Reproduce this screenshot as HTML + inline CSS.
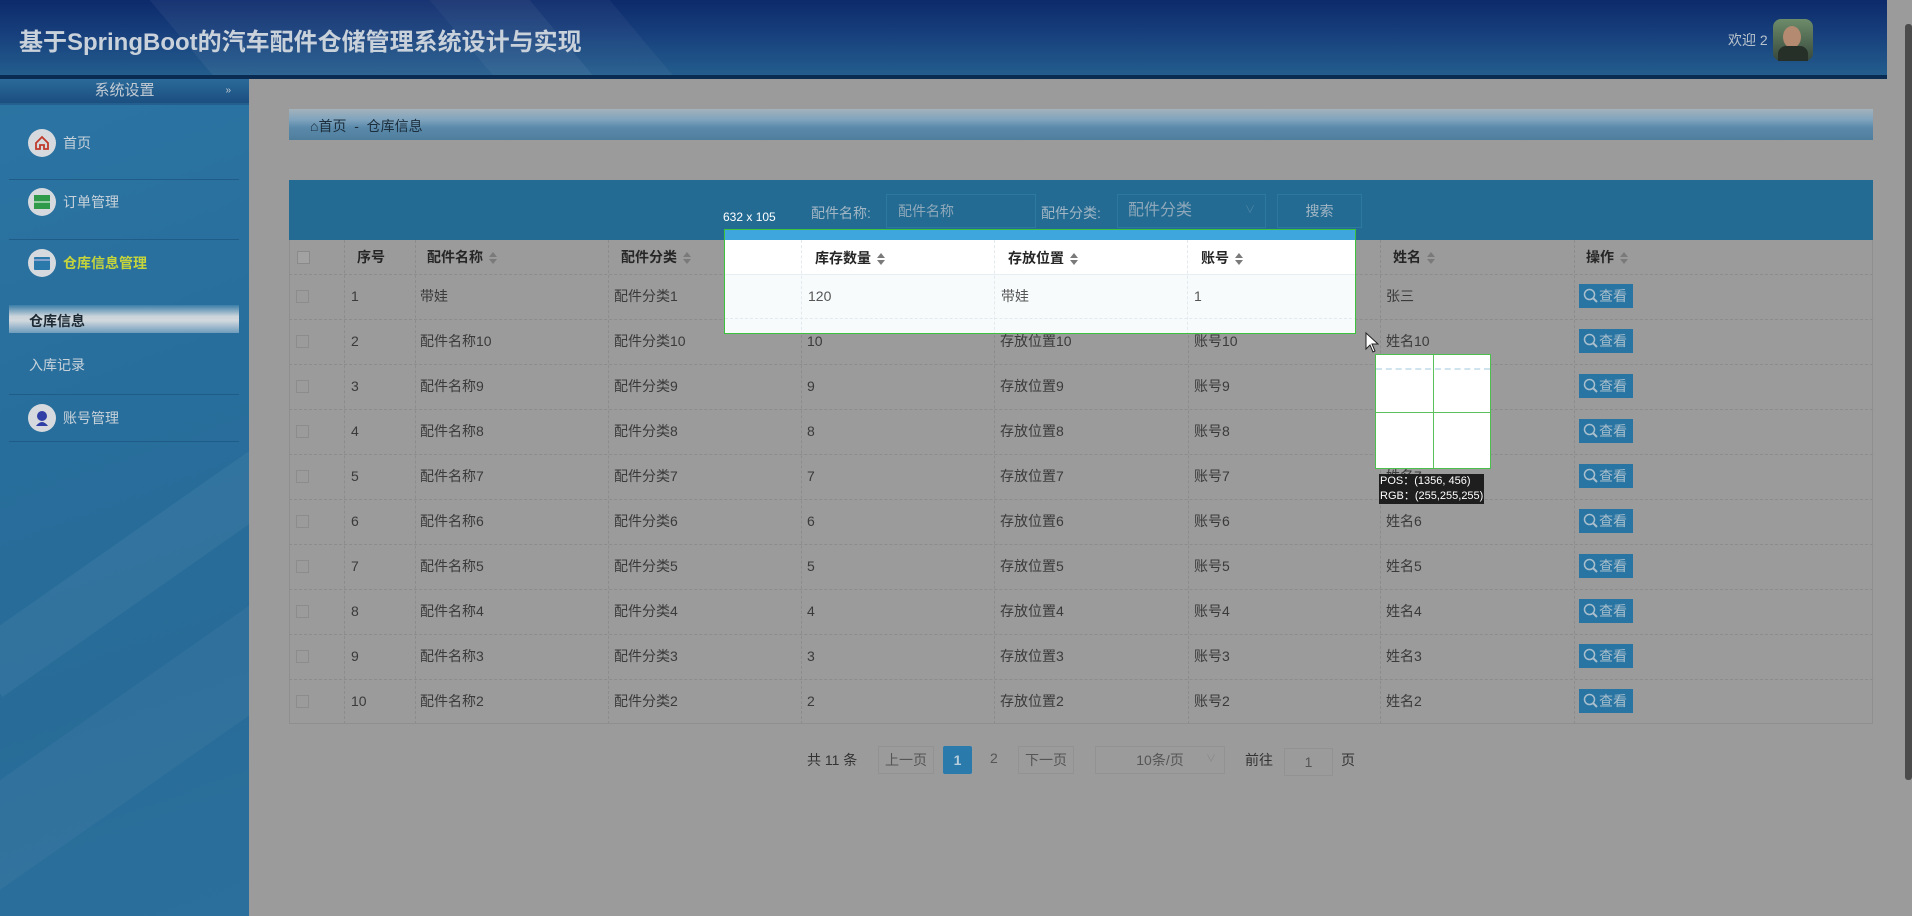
<!DOCTYPE html>
<html><head><meta charset="utf-8"><style>
*{margin:0;padding:0;box-sizing:border-box}
body{width:1912px;height:916px;overflow:hidden;background:#9b9b9b;font-family:"Liberation Sans","Noto Sans CJK SC",sans-serif;position:relative;color:#383838;font-size:14px}
.abs{position:absolute}
#hdr{left:0;top:0;width:1887px;height:79px;background:linear-gradient(180deg,#0d2a6b 0%,#173f7c 45%,#235d8d 100%);border-bottom:4px solid #0a2c52;overflow:hidden}
#hdr .t{left:19px;top:22px;font-size:24px;font-weight:bold;color:#c9d1da}
#side{left:0;top:79px;width:249px;height:837px;background:linear-gradient(160deg,#2b74a3 0%,#286e9c 40%,#286b98 70%,#2b709d 100%);overflow:hidden}
.streak{position:absolute;background:rgba(255,255,255,.05);transform:rotate(-35deg)}
#sys{left:0;top:0;width:249px;height:26px;background:linear-gradient(180deg,#2b6a9a,#1b4f80);color:#c4ccd4;text-align:center;font-size:15px;line-height:24px;border-bottom:2px solid #24608f}
.mi{position:absolute;left:28px;width:220px;height:30px;color:#c8d2da;font-size:14px;line-height:30px}
.mi .ic{position:absolute;left:0;top:1px;width:28px;height:28px;border-radius:50%;background:#d6dade}
.mi span{position:absolute;left:35px}
.ln{position:absolute;left:9px;width:230px;height:1px;background:#1f5c88}
.th{position:absolute;top:240px;height:34px;line-height:34px;font-weight:bold;font-size:14px;color:#262626}
.td{position:absolute;height:45px;line-height:45px;font-size:14px;color:#3a3a3a}
.arr{display:inline-block;vertical-align:middle;margin-left:6px;width:8px;height:12px;position:relative}
.arr:before{content:"";position:absolute;left:0;top:0;border:4px solid transparent;border-bottom:5px solid #7a7a7a;border-top:0}
.arr:after{content:"";position:absolute;left:0;top:7px;border:4px solid transparent;border-top:5px solid #7a7a7a;border-bottom:0}
.btn{position:absolute;width:54px;height:24px;background:#2874a2;color:#a9bfcd;font-size:14px;line-height:24px;padding-left:20px}
.btn svg{position:absolute;left:4px;top:4px}
.pg{position:absolute;top:746px;height:28px;line-height:26px;font-size:14px;text-align:center;border:1px solid #929292;color:#555}
</style></head><body>
<div id="hdr" class="abs">
<div class="abs" style="left:200px;top:-40px;width:380px;height:200px;background:rgba(255,255,255,.05);transform:skewX(40deg)"></div>
<div class="abs" style="left:480px;top:-40px;width:180px;height:200px;background:rgba(255,255,255,.04);transform:skewX(40deg)"></div>
<div class="t abs">基于SpringBoot的汽车配件仓储管理系统设计与实现</div>
<div class="abs" style="left:1728px;top:30px;color:#b9c3cc;font-size:14px">欢迎 2</div>
<div class="abs" style="left:1773px;top:19px;width:40px;height:42px;border-radius:8px;background:linear-gradient(180deg,#6d8c6a,#37483c)"></div>
<div class="abs" style="left:1783px;top:26px;width:18px;height:22px;border-radius:50%;background:#b48a70"></div>
<div class="abs" style="left:1778px;top:46px;width:30px;height:15px;border-radius:8px 8px 0 0;background:#263028"></div>
</div>
<div class="abs" style="left:1905px;top:24px;width:7px;height:756px;background:#4b4b4b;border-radius:3px"></div>

<div id="side" class="abs">
<div class="streak" style="left:-60px;top:420px;width:500px;height:60px"></div>
<div class="streak" style="left:-120px;top:620px;width:500px;height:90px;background:rgba(255,255,255,.04)"></div>
<div id="sys" class="abs">系统设置<span style="position:absolute;right:18px;top:0;font-size:10px">»</span></div>
<div class="mi" style="top:49px"><div class="ic"><svg width="28" height="28"><path d="M8 14l6-6 6 6v6h-4v-4h-4v4H8z" fill="none" stroke="#c0392b" stroke-width="1.8"/></svg></div><span>首页</span></div>
<div class="ln" style="top:100px"></div>
<div class="mi" style="top:108px"><div class="ic"><svg width="28" height="28"><rect x="6" y="7" width="16" height="14" fill="#2e9a4a"/><line x1="6" y1="14" x2="22" y2="14" stroke="#fff"/></svg></div><span>订单管理</span></div>
<div class="ln" style="top:160px"></div>
<div class="mi" style="top:169px"><div class="ic"><svg width="28" height="28"><rect x="6" y="8" width="16" height="13" rx="1" fill="#2a79aa"/><line x1="6" y1="11" x2="22" y2="11" stroke="#dce" /></svg></div><span style="color:#c6d43c;font-weight:bold">仓库信息管理</span></div>
<div class="abs" style="left:9px;top:226px;width:230px;height:28px;background:linear-gradient(180deg,#3a7ea8 0%,#c9d3da 40%,#d2d9de 55%,#6e9cbc 100%)"></div>
<div class="abs" style="left:29px;top:232px;font-size:14px;font-weight:bold;color:#1e2a33">仓库信息</div>
<div class="abs" style="left:29px;top:276px;font-size:14px;color:#c8d2da">入库记录</div>
<div class="ln" style="top:315px"></div>
<div class="mi" style="top:324px"><div class="ic"><svg width="28" height="28"><circle cx="14" cy="12" r="5" fill="#2f3fa6"/><path d="M8 22q6-8 12 0z" fill="#2f3fa6"/></svg></div><span>账号管理</span></div>
<div class="ln" style="top:362px"></div>
</div>

<div class="abs" style="left:289px;top:109px;width:1584px;height:31px;background:linear-gradient(180deg,#a3b2bc 0%,#7ea3bd 35%,#5a89aa 60%,#4f7e9d 100%)"></div>
<div class="abs" style="left:310px;top:116px;font-size:14px;color:#1c2e3c">⌂首页 &nbsp;- &nbsp;仓库信息</div>

<div class="abs" style="left:289px;top:180px;width:1584px;height:60px;background:#246b93"></div>
<div class="abs" style="left:811px;top:203px;color:#a2b6c4;font-size:14px">配件名称:</div>
<div class="abs" style="left:886px;top:194px;width:150px;height:34px;border:1px solid #2d789f;color:#8ea8ba;padding-left:11px;line-height:32px">配件名称</div>
<div class="abs" style="left:1041px;top:203px;color:#a2b6c4;font-size:14px">配件分类:</div>
<div class="abs" style="left:1117px;top:194px;width:149px;height:34px;border:1px solid #2d789f;color:#8ea8ba;padding-left:10px;line-height:32px;font-size:16px">配件分类<span style="position:absolute;right:10px;font-size:10px;color:#4f86a8">∨</span></div>
<div class="abs" style="left:1277px;top:194px;width:85px;height:34px;border:1px solid #2d789f;color:#a2b6c4;text-align:center;line-height:32px">搜索</div>

<div class="abs" style="left:289px;top:240px;width:1584px;height:484px;border:1px solid #8f8f8f;border-top:0"></div>
<div id="tbl"></div>
<div class="abs" style="left:297px;top:251px;width:13px;height:13px;border:1px solid #8a8a8a;background:#a2a2a2"></div>

<script>
var cols=[289,344,415,608,801,994,1188,1380,1574,1873];
var heads=[["序号",357,0],["配件名称",427,1],["配件分类",621,1],["库存数量",814,1],["存放位置",1007,1],["账号",1200,1],["姓名",1393,1],["操作",1586,1]];
var h="";
heads.forEach(function(x){h+='<div class="th" style="left:'+x[1]+'px">'+x[0]+(x[2]?'<i class="arr"></i>':'')+'</div>';});
for(var i=1;i<cols.length-1;i++){h+='<div class="abs" style="left:'+cols[i]+'px;top:240px;width:0;height:484px;border-left:1px dashed #8c8c8c"></div>';}
var rows=[[1,"带娃","配件分类1","120","带娃","1","张三"]];
for(var k=10;k>=2;k--)rows.push([12-k,"配件名称"+k,"配件分类"+k,""+k,"存放位置"+k,"账号"+k,"姓名"+k]);
rows.forEach(function(r,j){var y=274+j*45;
h+='<div class="abs" style="left:289px;top:'+y+'px;width:1584px;border-top:1px dashed #8c8c8c"></div>';
h+='<div class="abs" style="left:296px;top:'+(y+16)+'px;width:13px;height:13px;border:1px solid #8c8c8c"></div>';
var xs=[351,420,614,807,1000,1194,1386];
r.forEach(function(v,c){h+='<div class="td" style="left:'+xs[c]+'px;top:'+y+'px">'+v+'</div>';});
h+='<div class="btn" style="left:1579px;top:'+(y+10)+'px"><svg width="16" height="16"><circle cx="6.5" cy="6.5" r="5" fill="none" stroke="#a9bfcd" stroke-width="1.5"/><line x1="10" y1="10" x2="14" y2="14" stroke="#a9bfcd" stroke-width="2"/></svg>查看</div>';});
document.getElementById("tbl").innerHTML=h;
</script>

<div class="abs" style="left:807px;top:750px;font-size:14px;color:#333">共 11 条</div>
<div class="pg" style="left:878px;width:56px">上一页</div>
<div class="pg" style="left:943px;width:29px;background:#2a7aab;border-color:#2a7aab;color:#b9cfdd;font-weight:bold;border-radius:2px">1</div>
<div class="abs" style="left:990px;top:750px;color:#555">2</div>
<div class="pg" style="left:1018px;width:56px">下一页</div>
<div class="pg" style="left:1095px;width:130px">10条/页<span style="position:absolute;right:8px;font-size:10px;color:#888">∨</span></div>
<div class="abs" style="left:1245px;top:750px;color:#333">前往</div>
<div class="pg" style="left:1284px;width:49px;top:748px">1</div>
<div class="abs" style="left:1341px;top:750px;color:#333">页</div>

<div class="abs" style="left:724px;top:229px;width:632px;height:105px;background:#fff;border:1px solid #3cc23c;overflow:hidden">
<div class="abs" style="left:0;top:0;width:632px;height:10px;background:#3ea6dc"></div>
<div class="abs" style="left:0;top:44px;width:632px;height:61px;background:#f7fbfc;border-top:1px solid #e6eef2"></div>
<div class="abs" style="left:76px;top:10px;height:95px;border-left:1px dashed #e3eaee"></div>
<div class="abs" style="left:269px;top:10px;height:95px;border-left:1px dashed #e3eaee"></div>
<div class="abs" style="left:462px;top:10px;height:95px;border-left:1px dashed #e3eaee"></div>
<div class="abs" style="left:0;top:88px;width:632px;border-top:1px dashed #e3eaee"></div>
<div class="th" style="left:90px;top:11px">库存数量<i class="arr"></i></div>
<div class="th" style="left:283px;top:11px">存放位置<i class="arr"></i></div>
<div class="th" style="left:476px;top:11px">账号<i class="arr"></i></div>
<div class="td" style="left:83px;top:44px;color:#555">120</div>
<div class="td" style="left:276px;top:44px;color:#555">带娃</div>
<div class="td" style="left:469px;top:44px;color:#555">1</div>
</div>
<div class="abs" style="left:723px;top:210px;color:#fff;font-size:12px">632 x 105</div>
<svg class="abs" style="left:1365px;top:332px" width="14" height="22"><path d="M1 1v16l4-4 3 7 2-1-3-7h6z" fill="#fff" stroke="#222"/></svg>
<div class="abs" style="left:1375px;top:354px;width:116px;height:115px;background:#fff;border:1px solid #4cc04c">
<div class="abs" style="left:0;top:13px;width:114px;border-top:2px dashed #cfe4ee"></div>
<div class="abs" style="left:57px;top:0;height:113px;border-left:1px solid #5cc05c"></div>
<div class="abs" style="left:0;top:57px;width:114px;border-top:1px solid #5cc05c"></div>
</div>
<div class="abs" style="left:1379px;top:474px;background:#1e1e1e;color:#fff;font-size:11px;line-height:15px;padding:0 1px">POS：(1356, 456)<br>RGB：(255,255,255)</div>
</body></html>
